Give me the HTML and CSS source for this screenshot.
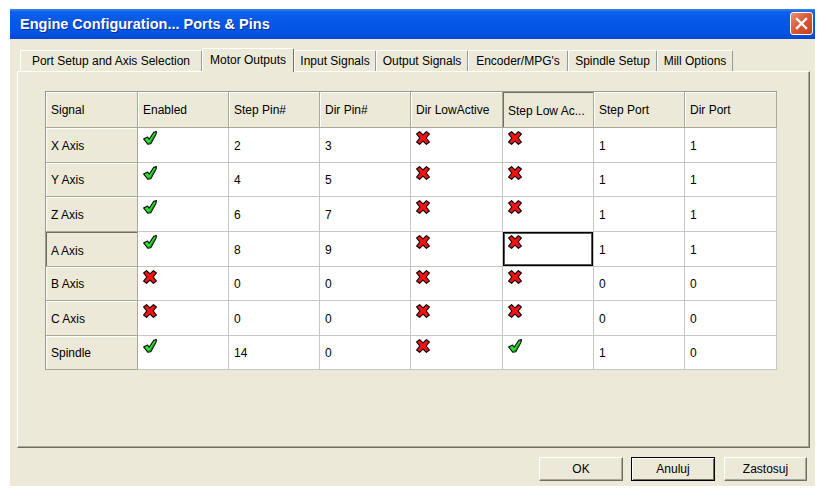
FILE: index.html
```html
<!DOCTYPE html>
<html>
<head>
<meta charset="utf-8">
<title>Engine Configuration... Ports &amp; Pins</title>
<link rel="stylesheet" href="styles.css">
</head>
<body>
<svg class="defs" width="0" height="0">
  <symbol id="chk" viewBox="0 0 14 14">
    <path d="M0.6 8 L4.6 6 L6.2 8.2 L10.8 1.2 L13.4 0.6 L13 3.2 L7.8 12.8 L4.8 13.2 Z" fill="#2ee02e" stroke="#000" stroke-width="1.1" stroke-linejoin="round"/>
    <path d="M5.2 12.2 L7.2 11.8 L12 3.6" fill="none" stroke="#0c8a0c" stroke-width="1"/>
  </symbol>
  <symbol id="crs" viewBox="0 0 14 14">
    <path d="M0.6 3 L3.6 0.6 L7 3.8 L10.4 0.6 L13.4 3 L10.2 7 L13.4 11 L10.4 13.4 L7 10.2 L3.6 13.4 L0.6 11 L3.8 7 Z" fill="#f01414" stroke="#000" stroke-width="1.1" stroke-linejoin="round"/>
  </symbol>
</svg>
<div class="window">
  <div class="titlebar">
    <span class="title">Engine Configuration... Ports &amp; Pins</span>
    <div class="close">
      <svg width="21" height="21" viewBox="0 0 21 21"><path d="M6 6 L15 15 M15 6 L6 15" stroke="#fff" stroke-width="2.4" stroke-linecap="square"/></svg>
    </div>
  </div>
  <div class="client">
    <div class="tabs">
      <div class="tab w1">Port Setup and Axis Selection</div>
      <div class="tab w2 active">Motor Outputs</div>
      <div class="tab w3">Input Signals</div>
      <div class="tab w4">Output Signals</div>
      <div class="tab w5">Encoder/MPG's</div>
      <div class="tab w6">Spindle Setup</div>
      <div class="tab w7">Mill Options</div>
    </div>
    <div class="panel">
      <div class="grid">
        <div class="c h">Signal</div>
        <div class="c h">Enabled</div>
        <div class="c h">Step Pin#</div>
        <div class="c h">Dir Pin#</div>
        <div class="c h">Dir LowActive</div>
        <div class="c h pressed">Step Low Ac...</div>
        <div class="c h">Step Port</div>
        <div class="c h">Dir Port</div>

        <div class="c h">X Axis</div>
        <div class="c ic"><svg class="ico"><use href="#chk"/></svg></div>
        <div class="c">2</div>
        <div class="c">3</div>
        <div class="c ic"><svg class="ico"><use href="#crs"/></svg></div>
        <div class="c ic"><svg class="ico"><use href="#crs"/></svg></div>
        <div class="c">1</div>
        <div class="c">1</div>

        <div class="c h">Y Axis</div>
        <div class="c ic"><svg class="ico"><use href="#chk"/></svg></div>
        <div class="c">4</div>
        <div class="c">5</div>
        <div class="c ic"><svg class="ico"><use href="#crs"/></svg></div>
        <div class="c ic"><svg class="ico"><use href="#crs"/></svg></div>
        <div class="c">1</div>
        <div class="c">1</div>

        <div class="c h">Z Axis</div>
        <div class="c ic"><svg class="ico"><use href="#chk"/></svg></div>
        <div class="c">6</div>
        <div class="c">7</div>
        <div class="c ic"><svg class="ico"><use href="#crs"/></svg></div>
        <div class="c ic"><svg class="ico"><use href="#crs"/></svg></div>
        <div class="c">1</div>
        <div class="c">1</div>

        <div class="c h pressed">A Axis</div>
        <div class="c ic"><svg class="ico"><use href="#chk"/></svg></div>
        <div class="c">8</div>
        <div class="c">9</div>
        <div class="c ic"><svg class="ico"><use href="#crs"/></svg></div>
        <div class="c ic focus"><svg class="ico"><use href="#crs"/></svg></div>
        <div class="c">1</div>
        <div class="c">1</div>

        <div class="c h">B Axis</div>
        <div class="c ic"><svg class="ico"><use href="#crs"/></svg></div>
        <div class="c">0</div>
        <div class="c">0</div>
        <div class="c ic"><svg class="ico"><use href="#crs"/></svg></div>
        <div class="c ic"><svg class="ico"><use href="#crs"/></svg></div>
        <div class="c">0</div>
        <div class="c">0</div>

        <div class="c h">C Axis</div>
        <div class="c ic"><svg class="ico"><use href="#crs"/></svg></div>
        <div class="c">0</div>
        <div class="c">0</div>
        <div class="c ic"><svg class="ico"><use href="#crs"/></svg></div>
        <div class="c ic"><svg class="ico"><use href="#crs"/></svg></div>
        <div class="c">0</div>
        <div class="c">0</div>

        <div class="c h">Spindle</div>
        <div class="c ic"><svg class="ico"><use href="#chk"/></svg></div>
        <div class="c">14</div>
        <div class="c">0</div>
        <div class="c ic"><svg class="ico"><use href="#crs"/></svg></div>
        <div class="c ic"><svg class="ico"><use href="#chk"/></svg></div>
        <div class="c">1</div>
        <div class="c">0</div>
      </div>
    </div>
    <div class="buttons">
      <button class="btn">OK</button>
      <button class="btn default">Anuluj</button>
      <button class="btn last">Zastosuj</button>
    </div>
  </div>
</div>
</body>
</html>
```
FILE: styles.css
```css
* { box-sizing: border-box; }

body {
  margin: 0;
  background: #ffffff;
  font-family: "Liberation Sans", Arial, sans-serif;
  font-size: 12px;
  color: #000;
}

.defs { position: absolute; width: 0; height: 0; overflow: hidden; }

.window {
  margin: 9px 0 0 10px;
  width: 805px;
  height: 477px;
  display: flex;
  flex-direction: column;
}

.titlebar {
  height: 30px;
  flex: none;
  display: flex;
  align-items: flex-start;
  justify-content: space-between;
  padding: 0 2px 0 10px;
  background: linear-gradient(#3b86f5 0, #0c61ea 3px, #0558e8 40%, #0454e2 80%, #0346d2 100%);
}

.title {
  color: #fff;
  font-weight: bold;
  font-size: 14.5px;
  line-height: 30px;
  text-shadow: 1px 1px #0b2f9a;
}

.close {
  margin-top: 3px;
  width: 23px;
  height: 23px;
  border: 1px solid #fff;
  border-radius: 3px;
  background: linear-gradient(135deg, #ec8f73 0%, #dc5a36 45%, #c8401c 100%);
  display: flex;
  align-items: center;
  justify-content: center;
}

.client {
  flex: 1;
  background: #ece9d8;
  padding: 9px 5px 5px 7px;
  display: flex;
  flex-direction: column;
}

.tabs {
  height: 23px;
  flex: none;
  display: flex;
  align-items: flex-end;
  padding-left: 3px;
}

.tab {
  height: 21px;
  background: #ece9d8;
  border-top: 1px solid #fff;
  border-left: 1px solid #fff;
  border-right: 1px solid #919b9c;
  border-radius: 2px 2px 0 0;
  display: flex;
  align-items: center;
  justify-content: center;
  white-space: nowrap;
}

.tab.active {
  height: 24px;
  margin-bottom: -1px;
  position: relative;
  z-index: 1;
  padding-bottom: 2px;
  border-right-color: #716f64;
}

.w1 { width: 182px; }
.w2 { width: 92px; }
.w3 { width: 82px; }
.w4 { width: 92px; }
.w5 { width: 100px; }
.w6 { width: 89px; }
.w7 { width: 76px; }

.panel {
  height: 377px;
  flex: none;
  border: 1px solid;
  border-color: #fff #716f64 #716f64 #fff;
  box-shadow: inset -1px -1px #aca899;
  padding: 19px 0 0 27px;
}

.grid {
  display: grid;
  grid-template-columns: 92px 91px 91px 91px 92px 91px 91px 92px;
  grid-template-rows: 36px 35px 34px 35px 35px 34px 35px 34px;
  width: 732px;
  border-left: 1px solid #9a9890;
  border-top: 1px solid #9a9890;
}

.c {
  background: #fff;
  border-right: 1px solid #c8c6c0;
  border-bottom: 1px solid #c8c6c0;
  display: flex;
  align-items: center;
  padding: 1px 0 0 5px;
  white-space: nowrap;
  overflow: hidden;
}

.h {
  background: #ece9d8;
  border-right-color: #aca899;
  border-bottom-color: #aca899;
  box-shadow: inset 1px 1px #fff;
}

.h.pressed {
  box-shadow: inset 1px 1px #716f64;
  padding-top: 3px;
}

.ic {
  align-items: flex-start;
  padding: 3px 0 0 5px;
}

.focus {
  box-shadow: inset 0 0 0 1px #000, inset 0 0 0 2px #555;
}

.ico {
  width: 14px;
  height: 14px;
}

.buttons {
  margin-top: 9px;
  display: flex;
  justify-content: flex-end;
  gap: 8px;
  padding-right: 3px;
}

.btn {
  width: 84px;
  height: 24px;
  font-family: "Liberation Sans", Arial, sans-serif;
  font-size: 12px;
  color: #000;
  background: #ece9d8;
  border: 1px solid;
  border-color: #fff #716f64 #716f64 #fff;
  box-shadow: inset -1px -1px #aca899;
  padding: 0;
}

.btn.default {
  border: 1px solid #000;
  box-shadow: inset 1px 1px #fff, inset -1px -1px #716f64;
}

.btn.last {
  width: 83px;
  margin-left: 1px;
}
```
